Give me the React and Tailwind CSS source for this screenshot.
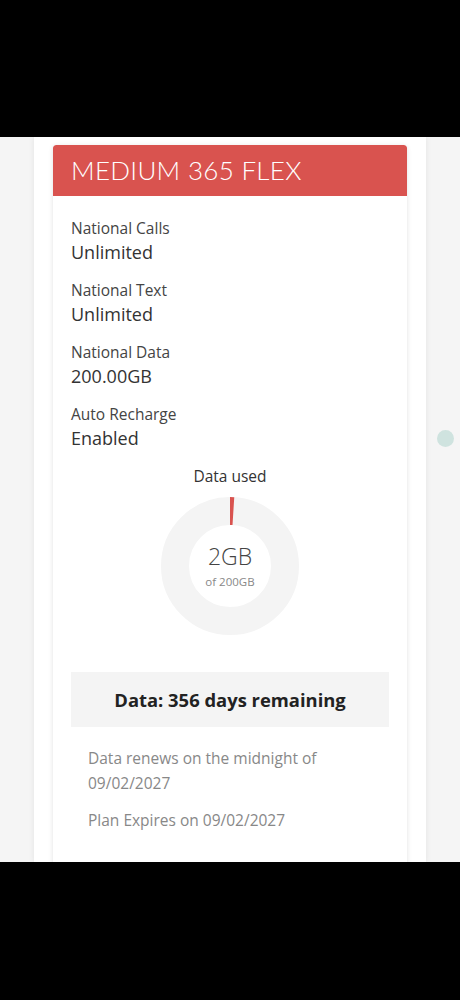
import React from 'react';

const rows = [
  { label: 'National Calls', value: 'Unlimited' },
  { label: 'National Text', value: 'Unlimited' },
  { label: 'National Data', value: '200.00GB' },
  { label: 'Auto Recharge', value: 'Enabled' },
];

function Donut({ used, total }) {
  const r = 55;
  const c = 2 * Math.PI * r;
  const part = (used / total) * c;
  return (
    <div className="relative w-[140px] h-[140px]">
      <svg width="140" height="140" viewBox="0 0 140 140" className="absolute inset-0">
        <circle cx="70" cy="70" r={r} fill="none" stroke="#f4f4f4" strokeWidth="28" />
        <circle
          cx="70" cy="70" r={r} fill="none" stroke="#d9534f" strokeWidth="28"
          strokeDasharray={`${part} ${c}`} transform="rotate(-90 70 70)"
        />
      </svg>
      <div className="absolute inset-0 flex flex-col items-center justify-center">
        <p className="text-[23px] leading-[28px] font-light text-[#444]">2GB</p>
        <p className="text-[11.5px] leading-[16px] text-[#888] mt-[4px]">of 200GB</p>
      </div>
    </div>
  );
}

export default function App() {
  return (
    <div className="w-[460px] h-[1000px] bg-black flex flex-col" style={{ fontFamily: '"Open Sans", sans-serif' }}>
      <div className="h-[137px] shrink-0" />
      <div className="h-[725px] shrink-0 bg-[#f5f5f5] relative overflow-hidden">
        <div className="mx-[34px] h-full bg-white shadow-[0_0_6px_rgba(0,0,0,0.08)] px-[19px] pt-[8px]">
          <div className="bg-white rounded-[3px] shadow-[0_1px_5px_rgba(0,0,0,0.12)] overflow-hidden">
            <div className="bg-[#d9534f] h-[51px] flex items-center px-[18px] rounded-t-[3px]">
              <h1 className="text-white text-[26px] font-light tracking-[0.3px]" style={{ fontFamily: 'Lato, sans-serif' }}>MEDIUM 365 FLEX</h1>
            </div>
            <div className="px-[18px] pt-[21px] pb-[40px]">
              <div className="flex flex-col gap-[14px]">
                {rows.map(r => (
                  <div key={r.label}>
                    <p className="text-[15.5px] leading-[22px] text-[#444]">{r.label}</p>
                    <p className="text-[18px] leading-[26px] text-[#333]">{r.value}</p>
                  </div>
                ))}
              </div>
              <div className="flex flex-col items-center mt-[14px]">
                <p className="text-[15.5px] leading-[22px] text-[#333]">Data used</p>
                <div className="mt-[9px]">
                  <Donut used={2} total={200} />
                </div>
              </div>
              <div className="mt-[36px] bg-[#f4f4f4] h-[55px] flex items-center justify-center">
                <p className="text-[18.4px] font-bold text-[#222]">Data: 356 days remaining</p>
              </div>
              <div className="px-[17px] pt-[19px] text-[15.5px] leading-[25px] text-[#888]">
                <p>Data renews on the midnight of<br />09/02/2027</p>
                <p className="mt-[12px]">Plan Expires on 09/02/2027</p>
              </div>
            </div>
          </div>
        </div>
        <div className="absolute left-[437px] top-[293px] w-[17px] h-[17px] rounded-full bg-[#cfe3df]" />
      </div>
      <div className="flex-1" />
    </div>
  );
}
